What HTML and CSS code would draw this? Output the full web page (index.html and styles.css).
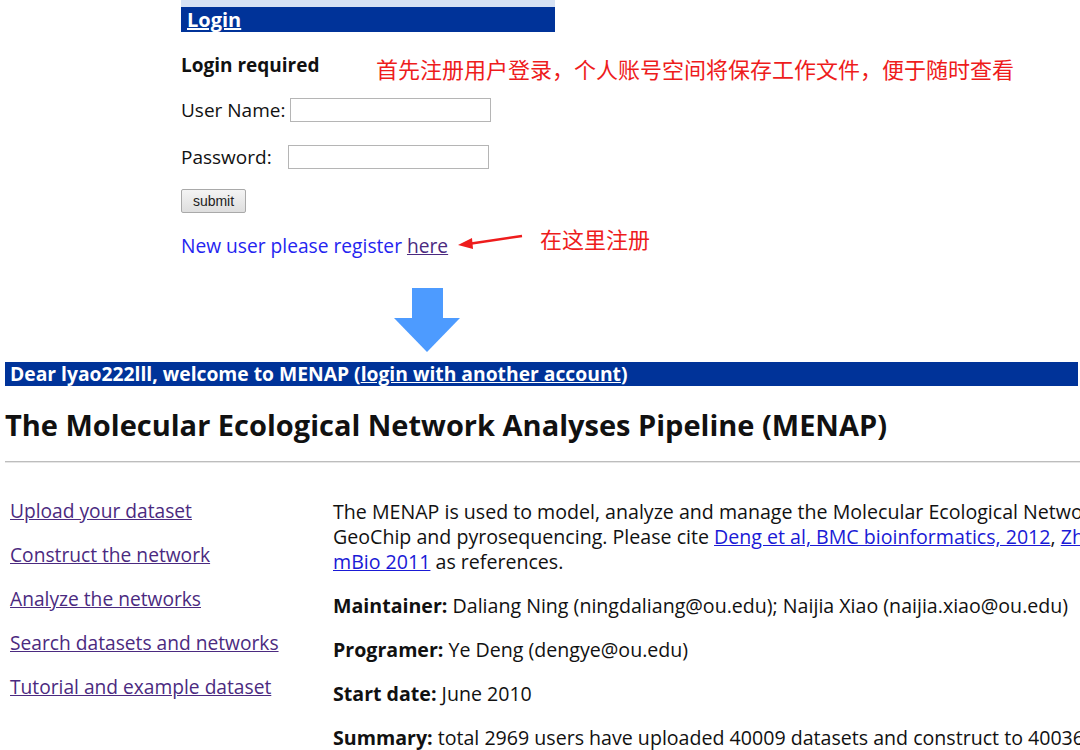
FILE: index.html
```html
<!DOCTYPE html>
<html>
<head>
    <title>MENAP</title>
    <link rel="stylesheet" href="styles.css">
</head>
<body>
    <div class="shot">
        <div class="login-box">
            <div class="tab-strip"></div>
            <div class="login-bar"><a href="#">Login</a></div>
            <div class="login-body">
                <h3>Login required</h3>
                <div class="field">
                    <label class="lbl-user">User Name:</label>
                    <input type="text" class="inp">
                </div>
                <div class="field">
                    <label class="lbl-pass">Password:</label>
                    <input type="password" class="inp">
                </div>
                <button class="submit">submit</button>
                <p class="register">New user please register <a href="#">here</a></p>
            </div>
        </div>

        <!-- annotations drawn over the screenshot -->
        <span class="note note-top">首先注册用户登录，个人账号空间将保存工作文件，便于随时查看</span>
        <span class="note note-reg">在这里注册</span>
        <svg class="red-arrow" width="70" height="20" viewBox="0 0 70 20">
            <line x1="66" y1="4" x2="12" y2="12" stroke="#ee1c1c" stroke-width="2.5"/>
            <polygon points="2,13 16,6 17,17" fill="#ee1c1c"/>
        </svg>
    </div>

    <div class="down">
        <svg width="66" height="66" viewBox="0 0 66 66">
            <rect x="18" y="0" width="31" height="31" fill="#4d9bff"/>
            <polygon points="0,30 66,30 33,64" fill="#4d9bff"/>
        </svg>
    </div>

    <div class="welcome">Dear lyao222lll, welcome to MENAP (<a href="#">login with another account</a>)</div>

    <h1 class="title">The Molecular Ecological Network Analyses Pipeline (MENAP)</h1>
    <hr class="rule">

    <div class="main">
        <ul class="nav">
            <li><a href="#">Upload your dataset</a></li>
            <li><a href="#">Construct the network</a></li>
            <li><a href="#">Analyze the networks</a></li>
            <li><a href="#">Search datasets and networks</a></li>
            <li><a href="#">Tutorial and example dataset</a></li>
        </ul>
        <div class="info">
            <p>The MENAP is used to model, analyze and manage the Molecular Ecological Networks (MENs) based on high-throughput metagenomics data such as<br>
            GeoChip and pyrosequencing. Please cite <a href="#">Deng et al, BMC bioinformatics, 2012</a>, <a href="#">Zhou et al, mBio 2010</a> and <a href="#">Zhou et al,</a><br>
            <a href="#">mBio 2011</a> as references.</p>
            <p><b>Maintainer:</b> Daliang Ning (ningdaliang@ou.edu); Naijia Xiao (naijia.xiao@ou.edu)</p>
            <p><b>Programer:</b> Ye Deng (dengye@ou.edu)</p>
            <p><b>Start date:</b> June 2010</p>
            <p><b>Summary:</b> total 2969 users have uploaded 40009 datasets and construct to 40036 networks.</p>
        </div>
    </div>
</body>
</html>
```

FILE: styles.css
```css
* {
    margin: 0;
    padding: 0;
    box-sizing: border-box;
}

body {
    width: 1080px;
    height: 750px;
    overflow: hidden;
    background: #fff;
    font-family: "Open Sans", "Noto Sans", sans-serif;
    color: #111;
}

.shot {
    position: relative;
    height: 280px;
}

.login-box {
    margin-left: 181px;
    width: 374px;
}

.tab-strip {
    height: 7px;
    background: #d6e2f4;
}

.login-bar {
    height: 25px;
    background: #003399;
    padding-left: 6px;
    line-height: 25px;
}

.login-bar a {
    color: #fff;
    font-weight: bold;
    font-size: 20px;
}

.login-body h3 {
    margin-top: 21px;
    font-size: 19px;
    line-height: 24px;
}

.field {
    display: flex;
    align-items: center;
    margin-top: 21px;
    font-size: 19px;
    height: 24px;
}

.field + .field {
    margin-top: 23px;
}

.lbl-user {
    margin-right: 5px;
}

.lbl-pass {
    margin-right: 16px;
}

.inp {
    width: 201px;
    height: 24px;
    border: 1px solid #b5b5b5;
    background: #fff;
}

.submit {
    display: block;
    margin-top: 20px;
    width: 65px;
    height: 24px;
    font-family: "Liberation Sans", Arial, sans-serif;
    font-size: 14px;
    color: #222;
    background: linear-gradient(#f4f4f4, #dedede);
    border: 1px solid #a9a9a9;
    border-radius: 2px;
}

.register {
    margin-top: 21px;
    font-size: 19.2px;
    line-height: 24px;
    color: #2424f0;
}

.register a {
    color: #4b2a80;
}

.note {
    position: absolute;
    color: #ee1c1c;
    font-family: "Noto Sans CJK SC", sans-serif;
    font-size: 22px;
    line-height: 28px;
    white-space: nowrap;
}

.note-top {
    left: 376px;
    top: 54px;
}

.note-reg {
    left: 540px;
    top: 224px;
}

.red-arrow {
    position: absolute;
    left: 456px;
    top: 232px;
}

.down {
    margin-left: 394px;
    height: 82px;
    padding-top: 8px;
}

.welcome {
    margin: 0 2px 0 5px;
    height: 24px;
    line-height: 24px;
    background: #003399;
    color: #fff;
    font-weight: bold;
    font-size: 19.3px;
    padding-left: 5px;
    white-space: nowrap;
}

.welcome a {
    color: #fff;
}

.title {
    margin: 21px 0 0 5px;
    font-size: 29px;
    line-height: 36px;
    white-space: nowrap;
}

.rule {
    margin: 18px 0 0 5px;
    border: 0;
    border-top: 1px solid #bdbdbd;
    border-bottom: 1px solid #e6e6e6;
}

.main {
    display: flex;
    margin-top: 36px;
}

.nav {
    list-style: none;
    width: 333px;
    padding-left: 10px;
    flex-shrink: 0;
}

.nav li {
    font-size: 19.2px;
    line-height: 24px;
    margin-bottom: 20px;
}

.nav a {
    color: #4b2a80;
}

.info {
    white-space: nowrap;
    font-size: 19.6px;
}

.info p {
    line-height: 25px;
    margin-bottom: 19px;
}

.info a {
    color: #1a1ad6;
}
```
